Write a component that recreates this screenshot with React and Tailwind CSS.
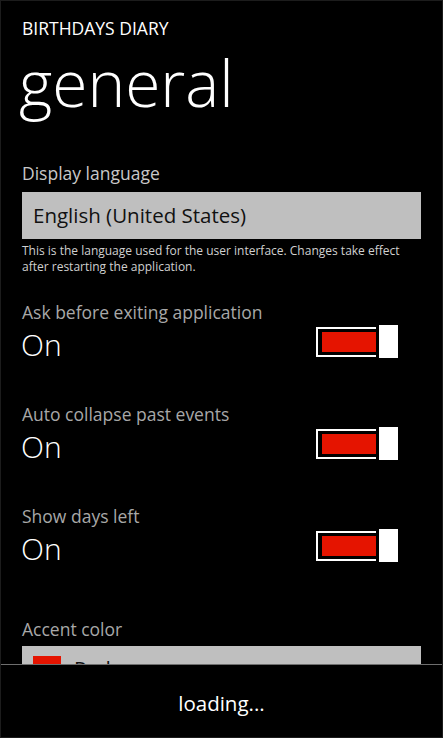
const font = { fontFamily: '"Open Sans", "Noto Sans", sans-serif' };

const Toggle = () => (
    <div className="flex items-center">
        <div className="w-[60px] h-[30px] border-2 border-r-0 border-white pl-[4px] py-[3px] flex">
            <div className="flex-1 bg-[#e51400]" />
        </div>
        <div className="w-[19px] h-[33px] bg-white ml-[3px]" />
    </div>
);

const ToggleRow = ({ label }) => (
    <div className="px-[21px] h-[102px]">
        <div className="text-[17.5px] leading-[22px] text-[#a8a8a8]">{label}</div>
        <div className="flex items-start justify-between pr-[23px]">
            <div className="text-[30px] font-light leading-[40px] text-white -ml-[1px] mt-[2px]">On</div>
            <div className="mt-[2px]">
                <Toggle />
            </div>
        </div>
    </div>
);

const App = () => {
    return (
        <div
            className="relative w-[443px] h-[738px] bg-black overflow-hidden border border-[#1c1c1c]"
            style={font}
        >
            {/* header */}
            <div className="pl-[21px] pt-[15px]">
                <div className="text-[17.5px] leading-[24px] text-white">BIRTHDAYS DIARY</div>
                <div className="text-[64px] font-light leading-[70px] text-white -ml-[3px] mt-[8px]">general</div>
            </div>

            {/* display language */}
            <div className="px-[21px] mt-[44px]">
                <div className="text-[17.5px] leading-[22px] text-[#c8c8c8]">Display language</div>
                <div className="mt-[8px] h-[47px] bg-[#bfbfbf] flex items-center px-[11px]">
                    <span className="text-[20.5px] text-[#111]">English (United States)</span>
                </div>
                <p className="mt-[4px] text-[12px] leading-[16px] text-[#d0d0d0]">
                    This is the language used for the user interface. Changes take effect after restarting the application.
                </p>
            </div>

            <div className="mt-[26px]">
                <ToggleRow label="Ask before exiting application" />
                <ToggleRow label="Auto collapse past events" />
                <ToggleRow label="Show days left" />
            </div>

            {/* accent color */}
            <div className="px-[21px] mt-[11px]">
                <div className="text-[17.5px] leading-[22px] text-[#a8a8a8]">Accent color</div>
                <div className="mt-[6px] h-[47px] bg-[#bfbfbf] flex items-start pt-[10px] px-[11px] gap-[13px]">
                    <div className="w-[28px] h-[20px] bg-[#e51400]" />
                    <span className="text-[20.5px] leading-[24px] text-[#111]">Red</span>
                </div>
            </div>

            {/* loading overlay */}
            <div className="absolute left-0 right-0 bottom-0 h-[73px] bg-black border-t border-[#6e6e6e] flex items-center justify-center pt-[4px]">
                <span className="text-[20.5px] text-white">loading...</span>
            </div>
        </div>
    );
};

export default App;
